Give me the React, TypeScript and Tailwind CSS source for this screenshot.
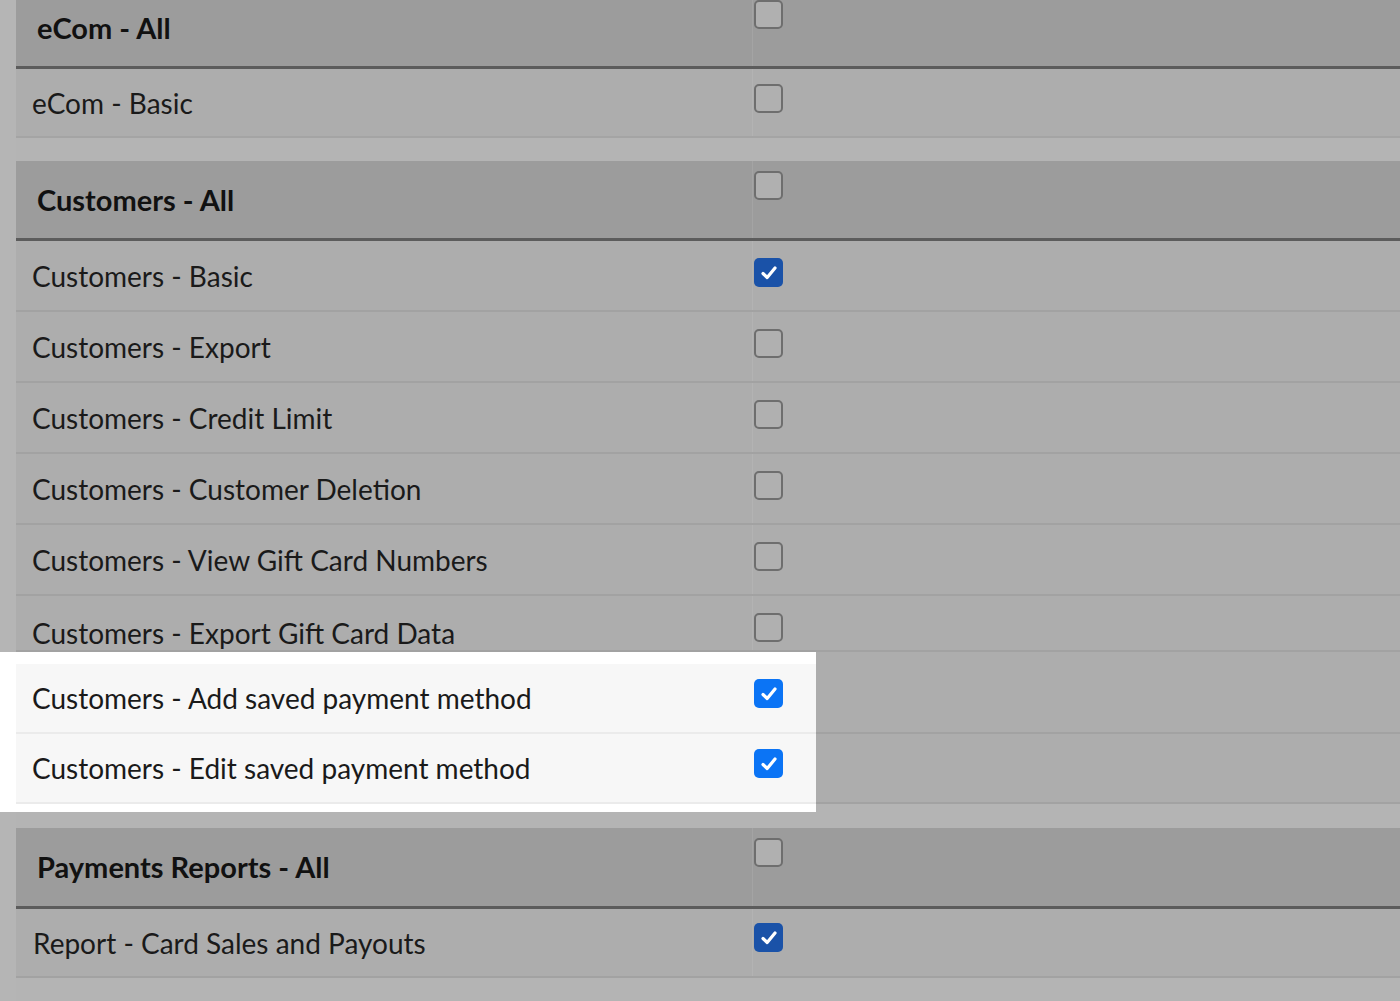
import React from 'react';

const font = { fontFamily: 'Lato, "Noto Sans", sans-serif' };

function Box({ checked, bright }: { checked?: boolean; bright?: boolean }) {
  if (checked) {
    return (
      <div className={`w-[29px] h-[29px] rounded-[5px] flex items-center justify-center ${bright ? 'bg-[#0b74f5]' : 'bg-[#1a52a8]'}`}>
        <svg width="20" height="20" viewBox="0 0 20 20">
          <path d="M4 10.5 L8.2 14.5 L16 5" fill="none" stroke="white" strokeWidth="3.2" strokeLinecap="round" strokeLinejoin="round" />
        </svg>
      </div>
    );
  }
  return <div className="w-[29px] h-[29px] rounded-[5px] border-2 border-[#6e6e6e] bg-[#b0b0b0]" />;
}

function Header({ label, h }: { label: string; h: string }) {
  return (
    <div className={`flex items-center bg-[#9c9c9c] border-b-[3px] border-[#5c5c5c] ${h}`}>
      <div className="w-[736px] pl-[21px] text-[29px] font-bold text-[#111]">{label}</div>
      <div className="self-stretch flex items-start pt-[10px] border-l border-[#a4a4a4] pl-[1px]">
        <Box />
      </div>
    </div>
  );
}

function Row({ label, checked }: { label: string; checked?: boolean }) {
  return (
    <div className="flex items-center h-[71px] bg-[#adadad] border-b-2 border-[#a2a2a2]">
      <div className="w-[736px] pl-[16px] text-[28px] text-[#1a1a1a]">{label}</div>
      <div className="self-stretch flex items-start pt-[17px] border-l border-[#b3b3b3] pl-[1px]">
        <Box checked={checked} />
      </div>
    </div>
  );
}

function LightRow({ label }: { label: string }) {
  return (
    <div className="flex items-center h-[70px] bg-[#f7f7f7] border-b-2 border-[#ebebeb]">
      <div className="w-[736px] pl-[16px] text-[28px] text-[#1a1a1a]">{label}</div>
      <div className="self-stretch flex items-start pt-[15px] pl-[2px]">
        <Box checked bright />
      </div>
    </div>
  );
}

export default function App() {
  return (
    <div style={font} className="w-[1400px] h-[1001px] overflow-hidden bg-[#b5b5b5]">
      <div className="pl-[16px]">
        <div className="-mt-[10px]">
          <Header label="eCom - All" h="h-[79px]" />
        </div>
        <div className="flex items-center h-[69px] bg-[#adadad] border-b-2 border-[#a4a4a4]">
          <div className="w-[736px] pl-[16px] text-[28px] text-[#1a1a1a]">eCom - Basic</div>
          <div className="self-stretch flex items-start pt-[15px] border-l border-[#b3b3b3] pl-[1px]">
            <Box />
          </div>
        </div>
        <div className="h-[23px] bg-[#b4b4b4]" />
        <Header label="Customers - All" h="h-[80px]" />
        <Row label="Customers - Basic" checked />
        <Row label="Customers - Export" />
        <Row label="Customers - Credit Limit" />
        <Row label="Customers - Customer Deletion" />
        <Row label="Customers - View Gift Card Numbers" />
        <div className="flex items-start h-[56px] bg-[#adadad] border-b-2 border-[#a2a2a2]">
          <div className="w-[736px] pl-[16px] pt-[18px] text-[28px] text-[#1a1a1a] leading-[38px]">Customers - Export Gift Card Data</div>
          <div className="self-stretch pt-[17px] border-l border-[#b3b3b3] pl-[1px]">
            <Box />
          </div>
        </div>
      </div>
      <div className="flex h-[160px]">
        <div className="w-[816px] bg-white pl-[16px] pt-[12px]">
          <LightRow label="Customers - Add saved payment method" />
          <LightRow label="Customers - Edit saved payment method" />
        </div>
        <div className="flex-1 flex flex-col bg-[#b4b4b4]">
          <div className="h-[12px] bg-[#adadad]" />
          <div className="h-[70px] bg-[#adadad] border-b-2 border-[#a2a2a2]" />
          <div className="h-[70px] bg-[#adadad] border-b-2 border-[#a2a2a2]" />
        </div>
      </div>
      <div className="pl-[16px]">
        <div className="h-[16px] bg-[#b4b4b4]" />
        <Header label="Payments Reports - All" h="h-[81px]" />
        <div className="flex items-center h-[69px] bg-[#adadad] border-b-2 border-[#a2a2a2]">
          <div className="w-[736px] pl-[17px] text-[28px] text-[#1a1a1a]">Report - Card Sales and Payouts</div>
          <div className="self-stretch flex items-start pt-[14px] border-l border-[#b3b3b3] pl-[1px]">
            <Box checked />
          </div>
        </div>
        <div className="h-[40px] bg-[#b4b4b4]" />
      </div>
    </div>
  );
}
